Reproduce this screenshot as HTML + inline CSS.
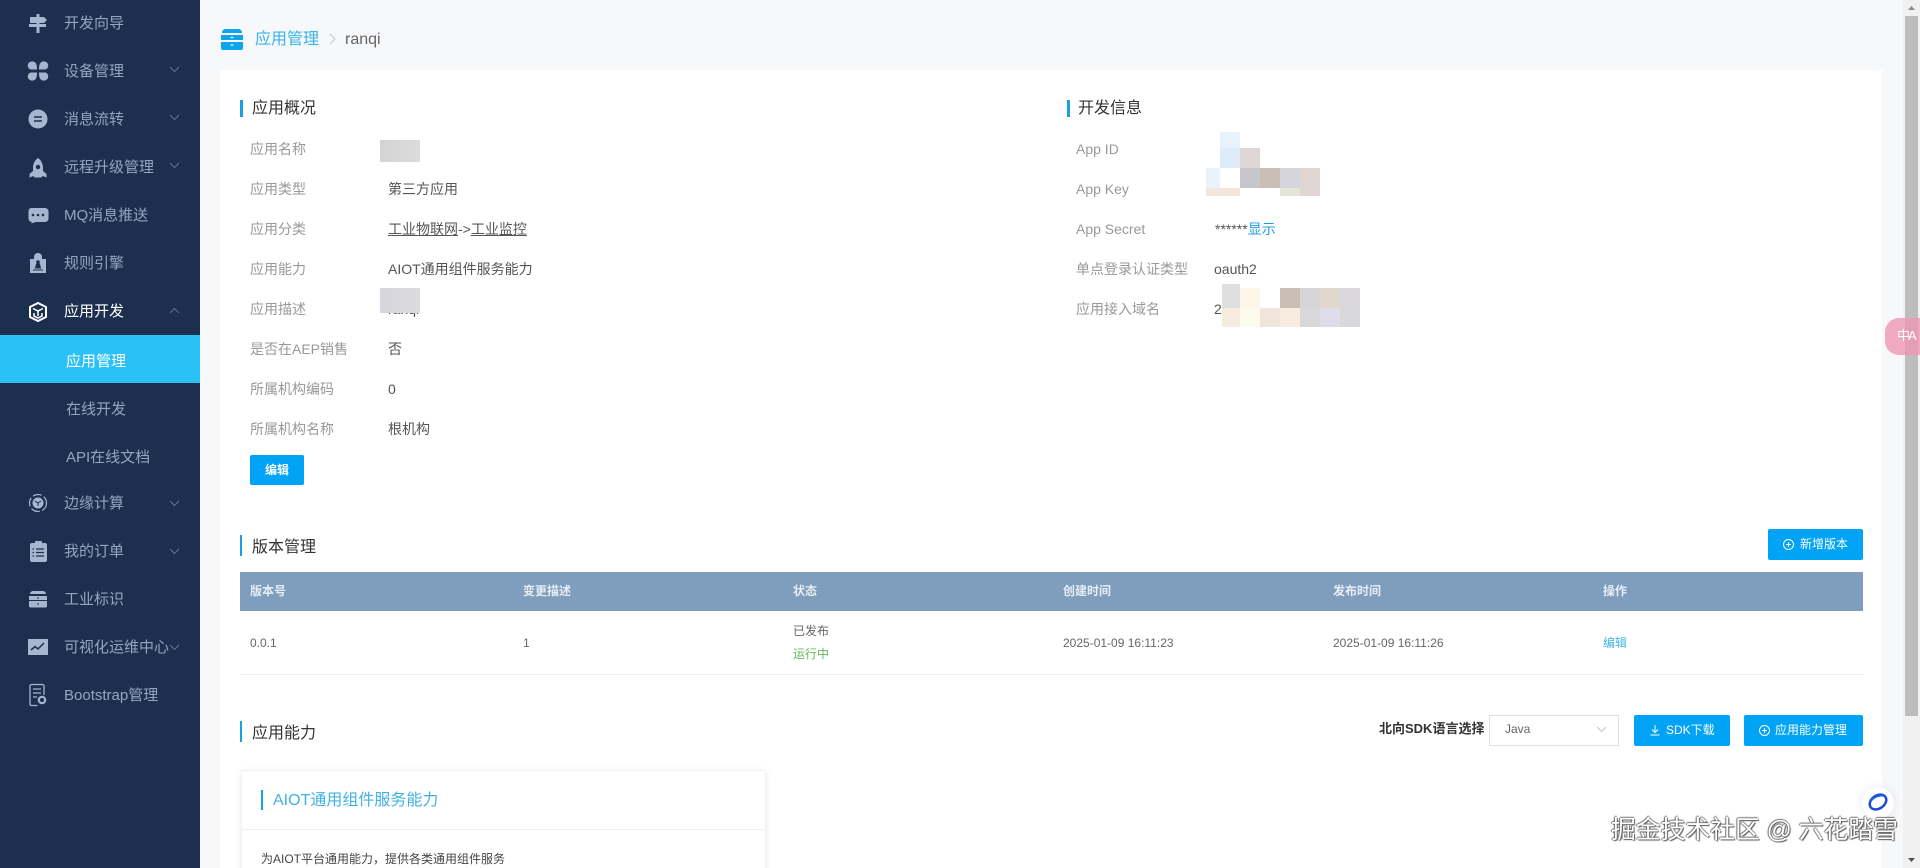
<!DOCTYPE html>
<html lang="zh"><head><meta charset="utf-8"><title>应用管理</title>
<style>
html,body{margin:0;padding:0;width:1920px;height:868px;overflow:hidden;background:#f7f8fa}
body{font-family:"Liberation Sans","Noto Sans CJK SC",sans-serif;position:relative}
.a{position:absolute}
.t{position:absolute;white-space:nowrap;line-height:20px;height:20px}
.n{color:#93a5bf;font-size:15px;left:64px}
.s{left:66px}
.l{color:#999;font-size:14px}
.v{color:#555;font-size:14px}
.h{color:#333;font-size:16px}
.bar{position:absolute;width:3px;background:#1a9fe0}
.th{color:#e8eef5;font-size:12px;font-weight:bold}
.td{color:#666;font-size:12px}
.btn{position:absolute;background:#00a3f5;border-radius:2px;color:#fff;font-size:12px;text-align:center;line-height:31px;white-space:nowrap}
.b{position:absolute}
svg{position:absolute;overflow:visible}
</style></head><body>

<!-- sidebar -->
<div class="a" style="left:0;top:0;width:200px;height:868px;background:#1c2f4e"></div>
<div class="a" style="left:0;top:335px;width:200px;height:48px;background:#2bc1f6"></div>

<svg style="left:0;top:0" width="200" height="868" fill="#a6b6d0">
 <!-- signpost -->
 <rect x="36.500" y="14" width="3" height="19"/>
 <path d="M30 17h14l3 3-3 3H30z"/><path d="M29 24h17v3H29z"/>
 <!-- grid -->
 <path d="M30 62a4.500 4.500 0 0 1 4.500 0c2 1 2.500 4 2.500 7.500h-6a4 4 0 0 1-1-7.500zM46 62a4.500 4.500 0 0 0-4.500 0c-2 1-2.500 4-2.500 7.500h6a4 4 0 0 0 1-7.500zM30 80a4.500 4.500 0 0 0 4.500 0c2-1 2.500-4 2.500-7.500h-6a4 4 0 0 0-1 7.500zM46 80a4.500 4.500 0 0 1-4.500 0c-2-1-2.500-4-2.500-7.500h6a4 4 0 0 1 1 7.500z"/>
 <!-- message -->
 <circle cx="38" cy="119" r="9.500"/><path d="M34 117h8M34 121h8" stroke="#1c2f4e" stroke-width="1.500"/>
 <!-- rocket -->
 <path d="M38 158c3.500 2.500 5 6 5 10v3l3.500 3v3.500l-4-1.500-1 1.500h-7l-1-1.500-4 1.500V174l3.500-3v-3c0-4 1.500-7.500 5-10z"/><circle cx="38" cy="167" r="2.200" fill="#1c2f4e"/>
 <!-- chat -->
 <path d="M31 208h14a3.500 3.500 0 0 1 3.500 3.500v7a3.500 3.500 0 0 1-3.500 3.500h-9l-5 1.500 1-1.500a3.500 3.500 0 0 1-3.500-3.500v-7a3.500 3.500 0 0 1 2.500-3.500z"/><circle cx="33" cy="215" r="1.300" fill="#1c2f4e"/><circle cx="38" cy="215" r="1.300" fill="#1c2f4e"/><circle cx="43" cy="215" r="1.300" fill="#1c2f4e"/>
 <!-- clipboard lock -->
 <rect x="30" y="259" width="16" height="14"/><path d="M34 259v-2a4 4 0 0 1 8 0v2z"/><circle cx="38" cy="262" r="1.800" fill="#1c2f4e"/><path d="M36.500 264h3l1 4h-5zM33 270h10" stroke="#1c2f4e" fill="#1c2f4e"/>
</svg>
<!-- active icon -->
<svg style="left:28px;top:302px" width="20" height="20" fill="none" stroke="#fff" stroke-width="2"><path d="M10 1l8 4v10l-8 4-8-4V5z"/><path d="M5 6.500l5 2.500 5-2.500M10 9v5M6 11v3l4 2 4-2v-3" stroke-width="1.500"/></svg>
<svg style="left:0;top:0" width="200" height="868" fill="#a6b6d0">
 <!-- edge -->
 <circle cx="38" cy="503" r="8.500" fill="none" stroke="#a6b6d0" stroke-width="1.200" stroke-dasharray="9 2.500"/><circle cx="38" cy="503" r="5.500"/><path d="M35 501l3 2 3-2M38 503v3" stroke="#1c2f4e" fill="none"/>
 <!-- order -->
 <rect x="30" y="543" width="17" height="19" rx="2"/><rect x="35" y="541" width="7" height="3" rx="1"/><path d="M36 549h8M36 552.500h8M36 556h8M32.500 549h1.500M32.500 552.500h1.500M32.500 556h1.500" stroke="#1c2f4e" stroke-width="1.300"/>
 <!-- industrial -->
 <path d="M33 591h10a3 3 0 0 1 3 3H30a3 3 0 0 1 3-3zM29 596h18v4H29zM29 601h18v5a1.500 1.500 0 0 1-1.500 1.500h-15A1.500 1.500 0 0 1 29 606z"/><path d="M37 598h2M37 604h2" stroke="#1c2f4e"/>
 <!-- chart -->
 <rect x="28" y="639" width="20" height="16"/><path d="M31 650l4-3.500 3 2.500 6-6" stroke="#1c2f4e" stroke-width="1.500" fill="none"/>
 <!-- bootstrap -->
 <path d="M44 695v-9a1.500 1.500 0 0 0-1.500-1.500h-11a1.500 1.500 0 0 0-1.500 1.500v18a1.500 1.500 0 0 0 1.500 1.500h6M33 689h8M33 693h8M33 697h4" fill="none" stroke="#a6b6d0" stroke-width="1.300"/><circle cx="42" cy="700" r="3.200" fill="none" stroke="#a6b6d0" stroke-width="2.200"/>
</svg>

<div class="t n" style="top:14px">开发向导</div>
<div class="t n" style="top:62px">设备管理</div>
<div class="t n" style="top:110px">消息流转</div>
<div class="t n" style="top:158px">远程升级管理</div>
<div class="t n" style="top:206px">MQ消息推送</div>
<div class="t n" style="top:254px">规则引擎</div>
<div class="t n" style="top:302px;color:#fff">应用开发</div>
<div class="t n s" style="top:352px;color:#fff">应用管理</div>
<div class="t n s" style="top:400px">在线开发</div>
<div class="t n s" style="top:448px">API在线文档</div>
<div class="t n" style="top:494px">边缘计算</div>
<div class="t n" style="top:542px">我的订单</div>
<div class="t n" style="top:590px">工业标识</div>
<div class="t n" style="top:638px">可视化运维中心</div>
<div class="t n" style="top:686px">Bootstrap管理</div>

<svg style="left:0;top:0" width="200" height="868" fill="none" stroke="#5d7391" stroke-width="1">
 <path d="M170 67l4.500 4.500 4.500-4.500M170 115l4.500 4.500 4.500-4.500M170 163l4.500 4.500 4.500-4.500M170 501l4.500 4.500 4.500-4.500M170 549l4.500 4.500 4.500-4.500M170 645l4.500 4.500 4.500-4.500"/>
 <path d="M170 313l4.500-4.500 4.500 4.500"/>
</svg>

<!-- breadcrumb -->
<svg style="left:221px;top:29px" width="22" height="22" fill="#10a3ee"><path d="M4 0h14a4 4 0 0 1 3 4H1a4 4 0 0 1 3-4zM0 6h22v5H0zM0 13h22v6a2 2 0 0 1-2 2H2a2 2 0 0 1-2-2z"/><path d="M9.500 8.500h3M9.500 16h3" stroke="#f7f8fa" stroke-width="1.200"/></svg>
<div class="t" style="left:255px;top:30px;font-size:16px;color:#35b4ea">应用管理</div>
<svg style="left:329px;top:32px" width="8" height="14" fill="none" stroke="#c4c7cc" stroke-width="1"><path d="M1 2l5 5-5 5"/></svg>
<div class="t" style="left:345px;top:30px;font-size:16px;color:#666">ranqi</div>

<!-- card -->
<div class="a" style="left:220px;top:70px;width:1662px;height:798px;background:#fff"></div>

<!-- overview -->
<div class="bar" style="left:240px;top:100px;height:17px"></div>
<div class="t h" style="left:252px;top:99px">应用概况</div>
<div class="t l" style="left:250px;top:139px">应用名称</div>
<div class="t l" style="left:250px;top:179px">应用类型</div><div class="t v" style="left:388px;top:179px">第三方应用</div>
<div class="t l" style="left:250px;top:219px">应用分类</div><div class="t v" style="left:388px;top:219px"><span style="text-decoration:underline">工业物联网</span>-&gt;<span style="text-decoration:underline">工业监控</span></div>
<div class="t l" style="left:250px;top:259px">应用能力</div><div class="t v" style="left:388px;top:259px">AIOT通用组件服务能力</div>
<div class="t l" style="left:250px;top:299px">应用描述</div><div class="t v" style="left:388px;top:299px">ranqi</div>
<div class="t l" style="left:250px;top:339px">是否在AEP销售</div><div class="t v" style="left:388px;top:339px">否</div>
<div class="t l" style="left:250px;top:379px">所属机构编码</div><div class="t v" style="left:388px;top:379px">0</div>
<div class="t l" style="left:250px;top:419px">所属机构名称</div><div class="t v" style="left:388px;top:419px">根机构</div>
<div class="a" style="left:380px;top:140px;width:40px;height:22px;background:linear-gradient(90deg,#d4d4d6,#dcdbdc)"></div>
<div class="a" style="left:380px;top:288px;width:40px;height:25px;background:linear-gradient(90deg,#d5d5dd,#dcdbde)"></div>
<div class="btn" style="left:250px;top:455px;width:54px;height:30px;line-height:30px;font-weight:bold">编辑</div>

<!-- dev info -->
<div class="bar" style="left:1067px;top:100px;height:17px"></div>
<div class="t h" style="left:1078px;top:99px">开发信息</div>
<div class="t l" style="left:1076px;top:139px">App ID</div>
<div class="t l" style="left:1076px;top:179px">App Key</div>
<div class="t l" style="left:1076px;top:219px">App Secret</div>
<div class="t l" style="left:1076px;top:259px">单点登录认证类型</div>
<div class="t l" style="left:1076px;top:299px">应用接入域名</div>
<div class="t v" style="left:1215px;top:219px">******<span style="color:#1d9fe6">显示</span></div>
<div class="t v" style="left:1214px;top:259px">oauth2</div>
<div class="t v" style="left:1214px;top:299px">2</div>
<div class="b" style="left:1220px;top:132px;width:20px;height:16px;background:#e6f3fd"></div>
<div class="b" style="left:1220px;top:148px;width:20px;height:20px;background:#deecfa"></div>
<div class="b" style="left:1240px;top:148px;width:20px;height:20px;background:#dfd7d6"></div>
<div class="b" style="left:1206px;top:168px;width:14px;height:20px;background:#e8f3fb"></div>
<div class="b" style="left:1240px;top:168px;width:20px;height:20px;background:#c8c6cd"></div>
<div class="b" style="left:1260px;top:168px;width:20px;height:20px;background:#c9bdb6"></div>
<div class="b" style="left:1280px;top:168px;width:20px;height:20px;background:#d6d5dd"></div>
<div class="b" style="left:1300px;top:168px;width:20px;height:28px;background:#e0d7d4"></div>
<div class="b" style="left:1280px;top:188px;width:20px;height:8px;background:#e4e4d8"></div>
<div class="b" style="left:1206px;top:188px;width:34px;height:8px;background:#f2e6dd"></div>
<div class="b" style="left:1222px;top:284px;width:18px;height:24px;background:#dde0de"></div>
<div class="b" style="left:1240px;top:288px;width:20px;height:20px;background:#fdf7ea"></div>
<div class="b" style="left:1280px;top:288px;width:20px;height:20px;background:#c9bfb5"></div>
<div class="b" style="left:1300px;top:288px;width:20px;height:20px;background:#d5d5d8"></div>
<div class="b" style="left:1320px;top:288px;width:20px;height:20px;background:#e0d8cd"></div>
<div class="b" style="left:1340px;top:288px;width:20px;height:20px;background:#d9d7dc"></div>
<div class="b" style="left:1222px;top:308px;width:18px;height:19px;background:#f6ebdf"></div>
<div class="b" style="left:1240px;top:308px;width:20px;height:19px;background:#fefaec"></div>
<div class="b" style="left:1260px;top:308px;width:20px;height:19px;background:#efe5db"></div>
<div class="b" style="left:1280px;top:308px;width:20px;height:19px;background:#f8ece0"></div>
<div class="b" style="left:1300px;top:308px;width:20px;height:19px;background:#d8d8da"></div>
<div class="b" style="left:1320px;top:308px;width:20px;height:19px;background:#dddde9"></div>
<div class="b" style="left:1340px;top:308px;width:20px;height:19px;background:#d8d7da"></div>

<!-- versions -->
<div class="bar" style="left:240px;top:535px;height:21px;width:2px"></div>
<div class="t h" style="left:252px;top:538px">版本管理</div>
<div class="btn" style="left:1768px;top:529px;width:95px;height:31px">
 <svg style="left:15px;top:10px" width="11" height="11" fill="none" stroke="#fff"><circle cx="5.500" cy="5.500" r="5"/><path d="M5.500 3v5M3 5.500h5"/></svg>
 <span style="position:absolute;left:32px">新增版本</span></div>
<div class="a" style="left:240px;top:572px;width:1623px;height:39px;background:#7f9dbd"></div>
<div class="t th" style="left:250px;top:581px">版本号</div>
<div class="t th" style="left:523px;top:581px">变更描述</div>
<div class="t th" style="left:793px;top:581px">状态</div>
<div class="t th" style="left:1063px;top:581px">创建时间</div>
<div class="t th" style="left:1333px;top:581px">发布时间</div>
<div class="t th" style="left:1603px;top:581px">操作</div>
<div class="t td" style="left:250px;top:633px">0.0.1</div>
<div class="t td" style="left:523px;top:633px">1</div>
<div class="t td" style="left:793px;top:621px">已发布</div>
<div class="t td" style="left:793px;top:644px;color:#62b85c">运行中</div>
<div class="t td" style="left:1063px;top:633px">2025-01-09 16:11:23</div>
<div class="t td" style="left:1333px;top:633px">2025-01-09 16:11:26</div>
<div class="t td" style="left:1603px;top:633px;color:#45b0e6">编辑</div>
<div class="a" style="left:240px;top:674px;width:1624px;height:1px;background:#ebeef2"></div>

<!-- capability -->
<div class="bar" style="left:240px;top:721px;height:21px;width:2px"></div>
<div class="t h" style="left:252px;top:724px">应用能力</div>
<div class="t" style="left:1379px;top:719px;font-size:13px;font-weight:bold;color:#333">北向SDK语言选择</div>
<div class="a" style="left:1489px;top:715px;width:128px;height:29px;border:1px solid #dcdfe6;background:#fff;box-sizing:content-box"></div>
<div class="t" style="left:1505px;top:719px;font-size:12px;color:#666">Java</div>
<svg style="left:1596px;top:726px" width="11" height="7" fill="none" stroke="#c0c4cc"><path d="M1 1l4.500 4.500L10 1"/></svg>
<div class="btn" style="left:1634px;top:715px;width:96px;height:31px">
 <svg style="left:16px;top:10px" width="10" height="11" fill="none" stroke="#fff"><path d="M5 0v7M2 4.500L5 7.500 8 4.500M0.500 10h9"/></svg>
 <span style="position:absolute;left:32px">SDK下载</span></div>
<div class="btn" style="left:1744px;top:715px;width:119px;height:31px">
 <svg style="left:15px;top:10px" width="11" height="11" fill="none" stroke="#fff"><circle cx="5.500" cy="5.500" r="5"/><path d="M5.500 3v5M3 5.500h5"/></svg>
 <span style="position:absolute;left:31px">应用能力管理</span></div>

<div class="a" style="left:241px;top:770px;width:523px;height:120px;background:#fff;border:1px solid #eef0f3;border-radius:2px;box-shadow:0 2px 8px rgba(0,0,0,.08)"></div>
<div class="a" style="left:242px;top:829px;width:522px;height:1px;background:#ebeef2"></div>
<div class="bar" style="left:261px;top:790px;height:20px;width:2px"></div>
<div class="t" style="left:273px;top:791px;font-size:16px;color:#3fb2e4">AIOT通用组件服务能力</div>
<div class="t" style="left:261px;top:849px;font-size:12px;color:#444">为AIOT平台通用能力，提供各类通用组件服务</div>

<!-- scrollbar -->
<div class="a" style="left:1903px;top:0;width:17px;height:868px;background:#f1f1f1"></div>
<div class="a" style="left:1905px;top:16px;width:13px;height:700px;background:#bdbdbd"></div>
<svg style="left:1905px;top:4px" width="13" height="8" fill="#8a8a8a"><path d="M6.500 2l3.500 4H3z"/></svg>
<svg style="left:1905px;top:856px" width="13" height="8" fill="#505050"><path d="M6.500 6l3.500-4H3z"/></svg>

<!-- translate tab -->
<div class="a" style="left:1885px;top:318px;width:35px;height:37px;background:rgba(238,150,180,.8);border-radius:14px 0 0 14px"></div>
<div class="t" style="left:1897px;top:326px;font-size:13px;color:#fff;letter-spacing:-2px;line-height:20px">中A</div>

<!-- floating icon -->
<div class="a" style="left:1862px;top:787px;width:32px;height:32px;border-radius:50%;background:#fff;box-shadow:0 0 8px rgba(60,90,200,.12)"></div>
<svg style="left:1868px;top:792px" width="20" height="20" fill="none" stroke="#2049d8" stroke-width="2.500"><ellipse cx="10" cy="10" rx="9" ry="6.500" transform="rotate(-35 10 10)"/><path d="M3 9c3-4 9-6 13-5" stroke="#1a6be0" stroke-width="1.500"/></svg>

<!-- watermark -->
<div class="t" style="left:1611px;top:815px;height:32px;line-height:32px;font-size:24.800px;color:#fff;text-shadow:1px 1px 1px #555,-1px 0 1px #666,0 -1px 1px #777">掘金技术社区 @ 六花踏雪</div>

</body></html>
